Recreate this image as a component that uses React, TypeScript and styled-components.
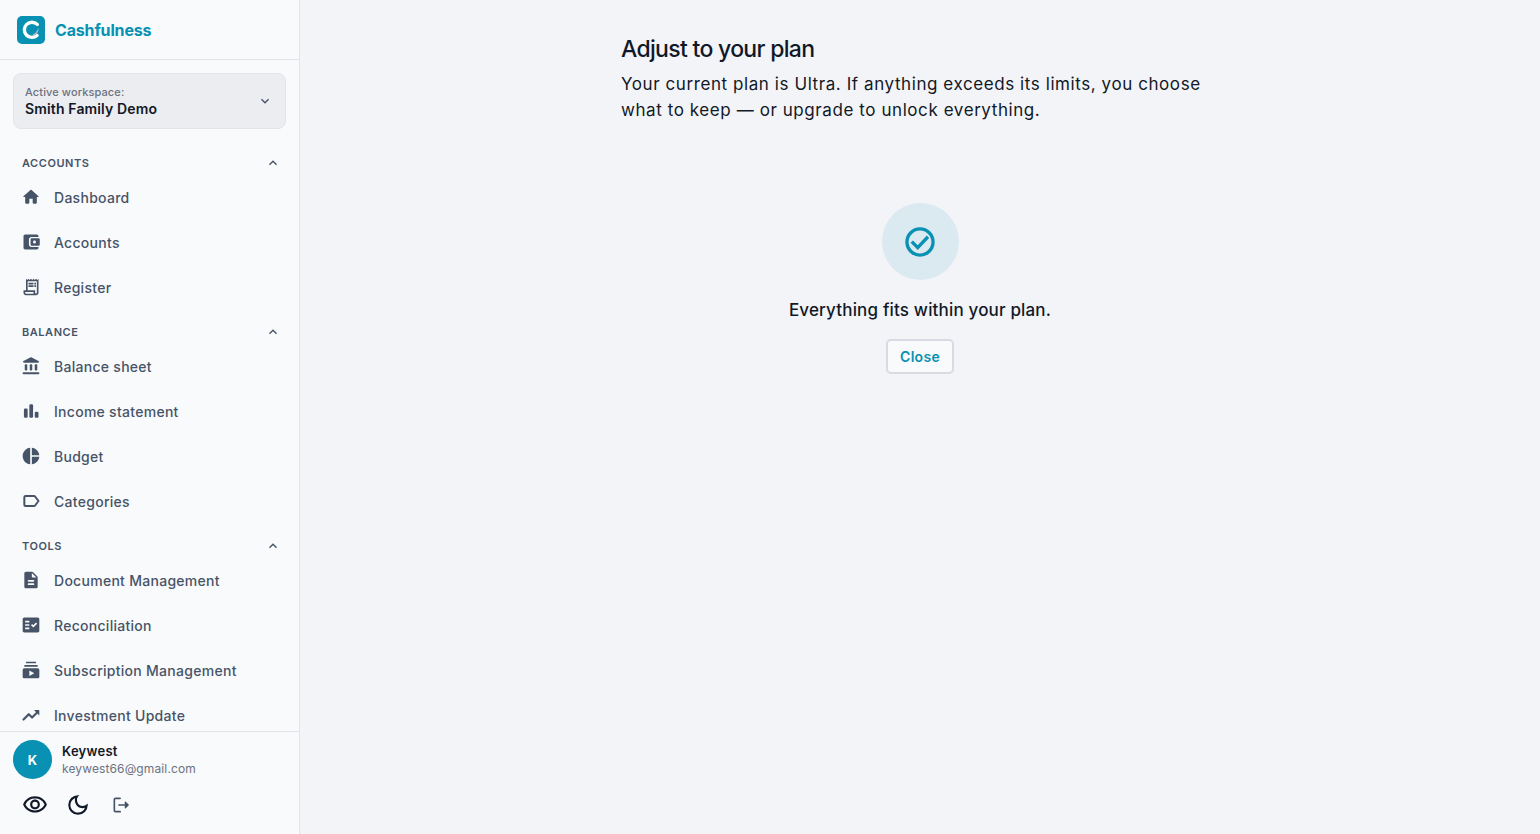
import React from "react";
import styled, { createGlobalStyle } from "styled-components";
import {
  MdOutlineReceiptLong,
  MdPieChart,
  MdFactCheck,
  MdSubscriptions,
  MdOutlineVisibility,
  MdOutlineDarkMode,
  MdKeyboardArrowDown,
  MdKeyboardArrowUp,
} from "react-icons/md";

const color = {
  brand: "#0891b2",
  ink: "#111827",
  nav: "#475467",
  muted: "#6b7280",
  line: "#e2e4ea",
  panel: "#f9fafc",
  page: "#f3f4f8",
};

const GlobalStyle = createGlobalStyle`
  *, *::before, *::after { box-sizing: border-box; }
  body {
    margin: 0;
    background: ${color.page};
    color: ${color.ink};
    font-family: Inter, "Liberation Sans", sans-serif;
  }
  button { font: inherit; cursor: pointer; }
  h1, h2, p, ul { margin: 0; padding: 0; }
`;

const Shell = styled.div`
  display: flex;
  height: 100vh;
`;

const Sidebar = styled.aside`
  flex: 0 0 300px;
  display: flex;
  flex-direction: column;
  background: ${color.panel};
  border-right: 1px solid ${color.line};
`;

const Brand = styled.a`
  flex: none;
  display: flex;
  align-items: center;
  gap: 10px;
  height: 60px;
  padding: 0 17px;
  border-bottom: 1px solid ${color.line};
  color: ${color.brand};
  font-size: 16px;
  font-weight: 700;
  letter-spacing: -0.01em;
  text-decoration: none;
`;

const Workspace = styled.button`
  flex: none;
  display: flex;
  align-items: center;
  justify-content: space-between;
  height: 56px;
  margin: 13px 13px 17px;
  padding: 0 12px 0 11px;
  border: 1px solid ${color.line};
  border-radius: 8px;
  background: #ecedf1;
  color: ${color.nav};
  text-align: left;

  svg { stroke: currentColor; }
`;

const WorkspaceLabel = styled.span`
  display: block;
  color: ${color.muted};
  font-size: 11px;
  font-weight: 500;
  line-height: 16px;
  letter-spacing: 0.01em;
`;

const WorkspaceName = styled.span`
  display: block;
  color: ${color.ink};
  font-size: 14px;
  font-weight: 600;
  line-height: 18px;
  letter-spacing: 0.01em;
`;

const Nav = styled.nav`
  flex: 1;
  min-height: 0;
  overflow: hidden;
`;

const SectionToggle = styled.button`
  display: flex;
  align-items: center;
  justify-content: space-between;
  width: 100%;
  height: 34px;
  padding: 0 18px 0 22px;
  border: 0;
  background: none;
  color: ${color.nav};
  font-size: 11px;
  font-weight: 600;
  letter-spacing: 0.05em;
  text-transform: uppercase;
`;

const NavList = styled.ul`
  list-style: none;
`;

const NavLink = styled.a`
  display: flex;
  align-items: center;
  gap: 13px;
  height: 45px;
  padding: 0 22px 11px 21px;
  color: ${color.nav};
  font-size: 14px;
  font-weight: 500;
  letter-spacing: 0.02em;
  text-decoration: none;

  svg { flex: none; }
`;

const Account = styled.footer`
  flex: none;
  padding: 8px 13px;
  border-top: 1px solid ${color.line};
`;

const Profile = styled.div`
  display: flex;
  align-items: center;
  gap: 10px;
`;

const Avatar = styled.span`
  display: grid;
  place-items: center;
  width: 39px;
  height: 39px;
  border-radius: 50%;
  background: ${color.brand};
  color: #fff;
  font-size: 13px;
  font-weight: 700;
`;

const ProfileName = styled.p`
  font-size: 13px;
  font-weight: 600;
  line-height: 18px;
  letter-spacing: 0.02em;
`;

const ProfileMail = styled.p`
  color: ${color.muted};
  font-size: 12px;
  line-height: 17px;
  letter-spacing: 0.01em;
`;

const Actions = styled.div`
  display: flex;
  align-items: center;
  margin-top: 4px;
`;

const IconButton = styled.button<{ $muted?: boolean }>`
  display: grid;
  place-items: center;
  width: 43px;
  height: 43px;
  padding: 0;
  border: 0;
  background: none;
  color: ${(p) => (p.$muted ? color.nav : color.ink)};
`;

const Main = styled.main`
  flex: 1;
  min-width: 0;
  overflow: auto;
  padding: 34px 20px;
`;

const Content = styled.div`
  max-width: 598px;
  margin: 0 auto;
`;

const Title = styled.h1`
  font-size: 23px;
  font-weight: 500;
  line-height: 30px;
  letter-spacing: -0.03em;
`;

const Lead = styled.p`
  margin-top: 7px;
  font-size: 17px;
  line-height: 26px;
  letter-spacing: 0.034em;
`;

const Result = styled.section`
  display: flex;
  flex-direction: column;
  align-items: center;
  padding-top: 80px;
`;

const Badge = styled.div`
  display: grid;
  place-items: center;
  width: 77px;
  height: 77px;
  border-radius: 50%;
  background: #dbe9f0;
  color: ${color.brand};
`;

const ResultText = styled.h2`
  margin-top: 17px;
  font-size: 17px;
  font-weight: 500;
  line-height: 26px;
  letter-spacing: 0.01em;
`;

const CloseButton = styled.button`
  height: 35px;
  margin-top: 16px;
  padding: 0 12px;
  border: 2px solid #d8dbe2;
  border-radius: 5px;
  background: ${color.panel};
  color: ${color.brand};
  font-size: 14px;
  font-weight: 600;
  letter-spacing: 0.02em;
`;

const Glyph = ({ size = 20, children }: { size?: number; children: React.ReactNode }) => (
  <svg width={size} height={size} viewBox="0 0 24 24" fill="currentColor" aria-hidden="true">
    {children}
  </svg>
);

const Logo = () => (
  <svg width="28" height="28" viewBox="0 0 28 28" fill="none" aria-hidden="true">
    <rect width="28" height="28" rx="5" fill={color.brand} />
    <path
      d="M20.300 8.400A7.600 7.600 0 1 0 20 19.500"
      stroke="#fff"
      strokeWidth="3.400"
      strokeLinecap="round"
    />
    <path d="M21.500 11.500c-1 3.500-3.500 6.500-7 8l4.500-.5c1.800-2 2.600-5 2.500-7.500z" fill="#b3bcc6" />
  </svg>
);

const HomeIcon = () => (
  <Glyph>
    <path d="M10 19v-5h4v5c0 .55.45 1 1 1h3c.55 0 1-.45 1-1v-7h1.700c.46 0 .68-.57.33-.87L12.670 3.600c-.38-.34-.96-.34-1.340 0l-8.360 7.530c-.34.3-.13.87.33.87H5v7c0 .55.45 1 1 1h3c.55 0 1-.45 1-1z" />
  </Glyph>
);

const WalletIcon = () => (
  <Glyph>
    <path d="M9.500 15V9c0-1.700 1.300-3 3-3H21V5c0-1.100-.9-2-2-2H5c-1.100 0-2 .9-2 2v14c0 1.100.9 2 2 2h14c1.100 0 2-.9 2-2v-1h-8.500c-1.700 0-3-1.300-3-3z" />
    <path
      fillRule="evenodd"
      d="M13 7.500c-.83 0-1.500.67-1.500 1.500v6c0 .83.67 1.500 1.500 1.500h8c.83 0 1.500-.67 1.500-1.500V9c0-.83-.67-1.500-1.500-1.500h-8zm3.200 6.300c-1 0-1.800-.8-1.800-1.800s.8-1.800 1.800-1.800 1.800.8 1.800 1.800-.8 1.800-1.800 1.800z"
    />
  </Glyph>
);

const BankIcon = () => (
  <Glyph>
    <path d="M11.100 1.700 3 5.900c-.4.200-.6.600-.6 1 0 .6.500 1.100 1.100 1.100h17c.6 0 1.100-.5 1.100-1.100 0-.4-.2-.8-.6-1l-8.100-4.200c-.6-.3-1.200-.3-1.800 0z" />
    <rect x="4.500" y="10" width="3" height="7.500" rx="1" />
    <rect x="10.500" y="10" width="3" height="7.500" rx="1" />
    <rect x="16.500" y="10" width="3" height="7.500" rx="1" />
    <rect x="2" y="19.500" width="20" height="2.500" rx="1" />
  </Glyph>
);

const BarsIcon = () => (
  <Glyph>
    <rect x="3.500" y="9" width="4.500" height="11" rx="1.500" />
    <rect x="10" y="4" width="4.500" height="16" rx="1.500" />
    <rect x="16.500" y="13" width="4.500" height="7" rx="1.500" />
  </Glyph>
);

const LabelIcon = () => (
  <Glyph>
    <path
      d="M5.500 6h10.200c.5 0 .9.200 1.200.600L21 12l-4.100 5.400c-.3.400-.7.600-1.200.600H5.500c-.8 0-1.500-.7-1.500-1.500v-9C4 6.700 4.700 6 5.500 6z"
      fill="none"
      stroke="currentColor"
      strokeWidth="2.400"
      strokeLinejoin="round"
    />
  </Glyph>
);

const DocumentIcon = () => (
  <Glyph>
    <path d="M14.590 2.590c-.38-.38-.89-.59-1.420-.59H6c-1.100 0-2 .9-2 2v16c0 1.100.89 2 1.990 2H18c1.100 0 2-.9 2-2V8.830c0-.53-.21-1.040-.59-1.410l-4.820-4.830zM15 18H9c-.55 0-1-.45-1-1s.45-1 1-1h6c.55 0 1 .45 1 1s-.45 1-1 1zm0-4H9c-.55 0-1-.45-1-1s.45-1 1-1h6c.55 0 1 .45 1 1s-.45 1-1 1zm-2-6V3.500L18.500 9H14c-.55 0-1-.45-1-1z" />
  </Glyph>
);

const TrendIcon = () => (
  <Glyph>
    <path
      d="m3 17.500 6.300-6.500 4 4 7-7"
      fill="none"
      stroke="currentColor"
      strokeWidth="2.600"
      strokeLinecap="round"
      strokeLinejoin="round"
    />
    <path d="M15.500 6H21c.6 0 1 .4 1 1v5.500z" />
  </Glyph>
);

const LogoutIcon = () => (
  <Glyph>
    <path
      d="M11 4H5.500C4.700 4 4 4.700 4 5.500v13c0 .8.7 1.500 1.500 1.500H11M9.500 12H18"
      fill="none"
      stroke="currentColor"
      strokeWidth="2"
      strokeLinecap="round"
    />
    <path d="m21.200 11.500-3.800-3.600c-.3-.3-.9-.1-.9.400v7.400c0 .5.600.7.900.4l3.800-3.600c.3-.3.3-.7 0-1z" />
  </Glyph>
);

const sections = [
  {
    title: "Accounts",
    items: [
      { label: "Dashboard", icon: <HomeIcon /> },
      { label: "Accounts", icon: <WalletIcon /> },
      { label: "Register", icon: <MdOutlineReceiptLong size={20} /> },
    ],
  },
  {
    title: "Balance",
    items: [
      { label: "Balance sheet", icon: <BankIcon /> },
      { label: "Income statement", icon: <BarsIcon /> },
      { label: "Budget", icon: <MdPieChart size={20} /> },
      { label: "Categories", icon: <LabelIcon /> },
    ],
  },
  {
    title: "Tools",
    items: [
      { label: "Document Management", icon: <DocumentIcon /> },
      { label: "Reconciliation", icon: <MdFactCheck size={20} /> },
      { label: "Subscription Management", icon: <MdSubscriptions size={20} /> },
      { label: "Investment Update", icon: <TrendIcon /> },
    ],
  },
];

export default function App() {
  return (
    <>
      <GlobalStyle />
      <Shell>
        <Sidebar>
          <Brand href="#">
            <Logo />
            Cashfulness
          </Brand>
          <Workspace type="button">
            <span>
              <WorkspaceLabel>Active workspace:</WorkspaceLabel>
              <WorkspaceName>Smith Family Demo</WorkspaceName>
            </span>
            <MdKeyboardArrowDown size={16} />
          </Workspace>
          <Nav>
            {sections.map((section) => (
              <div key={section.title}>
                <SectionToggle type="button" aria-expanded="true">
                  {section.title}
                  <MdKeyboardArrowUp size={16} />
                </SectionToggle>
                <NavList>
                  {section.items.map((item) => (
                    <li key={item.label}>
                      <NavLink href="#">
                        {item.icon}
                        {item.label}
                      </NavLink>
                    </li>
                  ))}
                </NavList>
              </div>
            ))}
          </Nav>
          <Account>
            <Profile>
              <Avatar>K</Avatar>
              <div>
                <ProfileName>Keywest</ProfileName>
                <ProfileMail>keywest66@gmail.com</ProfileMail>
              </div>
            </Profile>
            <Actions>
              <IconButton type="button" aria-label="Hide amounts">
                <MdOutlineVisibility size={26} />
              </IconButton>
              <IconButton type="button" aria-label="Dark mode">
                <MdOutlineDarkMode size={26} />
              </IconButton>
              <IconButton type="button" aria-label="Log out" $muted>
                <LogoutIcon />
              </IconButton>
            </Actions>
          </Account>
        </Sidebar>
        <Main>
          <Content>
            <Title>Adjust to your plan</Title>
            <Lead>
              Your current plan is Ultra. If anything exceeds its limits, you choose what to keep —
              or upgrade to unlock everything.
            </Lead>
            <Result>
              <Badge>
                <Glyph size={36}>
                  <circle
                    cx="12"
                    cy="12"
                    r="8.700"
                    fill="none"
                    stroke="currentColor"
                    strokeWidth="2.200"
                  />
                  <path
                    d="m6.500 11.700 4 4 6.800-7.200"
                    fill="none"
                    stroke="currentColor"
                    strokeWidth="2.200"
                  />
                </Glyph>
              </Badge>
              <ResultText>Everything fits within your plan.</ResultText>
              <CloseButton type="button">Close</CloseButton>
            </Result>
          </Content>
        </Main>
      </Shell>
    </>
  );
}
